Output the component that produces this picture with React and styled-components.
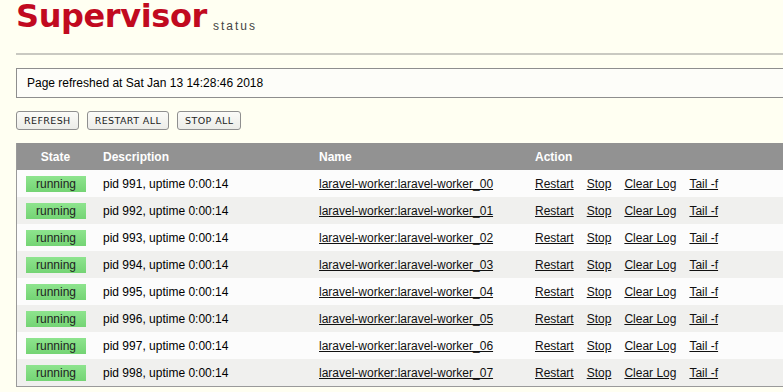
import React from "react";
import styled, { createGlobalStyle } from "styled-components";

const GlobalStyle = createGlobalStyle`
	html, body {
		margin: 0;
		padding: 0;
		overflow: hidden;
		background: #fffff2;
	}
	body {
		font-family: "Liberation Sans", Arial, sans-serif;
		font-size: 12px;
		color: #000;
	}
`;

const Page = styled.div`
	width: 860px;
	padding-left: 16px;
`;

const Header = styled.div`
	height: 32px;
	line-height: 32px;
	white-space: nowrap;
`;

const Logo = styled.span`
	font-family: "DejaVu Sans", sans-serif;
	font-weight: bold;
	font-size: 32px;
	letter-spacing: -0.4px;
	color: #c10a1f;
`;

const LogoSub = styled.span`
	font-family: "Liberation Sans", Arial, sans-serif;
	font-size: 12px;
	letter-spacing: 2px;
	color: #444;
	margin-left: 6px;
	vertical-align: -3px;
`;

const Rule = styled.div`
	margin-top: 21px;
	border-top: 2px solid #c9c9c1;
`;

const RefreshBox = styled.div`
	margin-top: 13px;
	height: 28px;
	line-height: 28px;
	border: 1px solid #8e8e8e;
	border-right: none;
	background: #fdfdf9;
	padding-left: 10px;
	font-size: 12px;
`;

const ButtonBar = styled.div`
	display: flex;
	gap: 8px;
	margin-top: 13px;
`;

const Button = styled.button`
	height: 19px;
	padding: 0 7px;
	border: 1px solid #8f8f8f;
	border-radius: 3px;
	background: linear-gradient(#fbfbf8, #ecece8);
	font-family: "DejaVu Sans", sans-serif;
	font-size: 9.5px;
	letter-spacing: 0.4px;
	color: #222;
	line-height: 17px;
`;

const Table = styled.table`
	margin-top: 13px;
	width: 100%;
	border-collapse: collapse;
	table-layout: fixed;
	border-left: 1px solid #9a9a9a;
	border-bottom: 1px solid #9a9a9a;
`;

const HeadCell = styled.th`
	height: 27px;
	padding: 0 0 0 ${(p) => (p.$center ? 0 : 9)}px;
	background: #929292;
	color: #fff;
	font-size: 12px;
	font-weight: bold;
	text-align: ${(p) => (p.$center ? "center" : "left")};
	width: ${(p) => (p.$width ? `${p.$width}px` : "auto")};
`;

const Row = styled.tr`
	background: ${(p) => (p.$even ? "#f0f0ee" : "#fcfcfc")};
`;

const Cell = styled.td`
	height: 27px;
	padding: 0 0 0 ${(p) => (p.$center ? 0 : 9)}px;
	text-align: ${(p) => (p.$center ? "center" : "left")};
	white-space: nowrap;
	vertical-align: middle;
`;

const StateBadge = styled.span`
	display: inline-block;
	width: 60px;
	height: 16px;
	line-height: 16px;
	margin-left: 1px;
	background: linear-gradient(#8ee48e, #74d474);
	color: #222;
	font-size: 12px;
	text-align: center;
`;

const Link = styled.a`
	color: #111;
	text-decoration: underline;
	cursor: pointer;
`;

const Actions = styled.div`
	display: flex;
	gap: 13px;
`;

const processes = [0, 1, 2, 3, 4, 5, 6, 7].map((i) => ({
	pid: 991 + i,
	name: `laravel-worker:laravel-worker_0${i}`,
}));

export default function App() {
	return (
		<Page>
			<GlobalStyle />
			<Header>
				<Logo>Supervisor</Logo>
				<LogoSub>status</LogoSub>
			</Header>
			<Rule />
			<RefreshBox>Page refreshed at Sat Jan 13 14:28:46 2018</RefreshBox>
			<ButtonBar>
				<Button>REFRESH</Button>
				<Button>RESTART ALL</Button>
				<Button>STOP ALL</Button>
			</ButtonBar>
			<Table>
				<thead>
					<tr>
						<HeadCell $center $width={77}>State</HeadCell>
						<HeadCell $width={207}>Description</HeadCell>
						<HeadCell $width={207}>Name</HeadCell>
						<HeadCell>Action</HeadCell>
					</tr>
				</thead>
				<tbody>
					{processes.map((p, i) => (
						<Row key={p.pid} $even={i % 2 === 1}>
							<Cell $center>
								<StateBadge>running</StateBadge>
							</Cell>
							<Cell>pid {p.pid}, uptime 0:00:14</Cell>
							<Cell>
								<Link>{p.name}</Link>
							</Cell>
							<Cell>
								<Actions>
									<Link>Restart</Link>
									<Link>Stop</Link>
									<Link>Clear Log</Link>
									<Link>Tail -f</Link>
								</Actions>
							</Cell>
						</Row>
					))}
				</tbody>
			</Table>
		</Page>
	);
}
